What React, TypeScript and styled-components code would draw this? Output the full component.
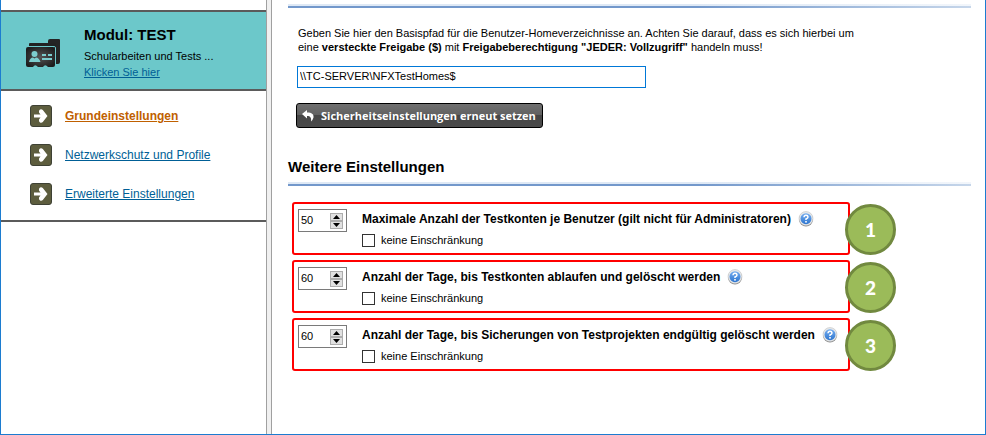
import React, { useState } from "react";
import styled, { createGlobalStyle } from "styled-components";

const GlobalStyle = createGlobalStyle`
  *, *::before, *::after { box-sizing: border-box; }
  body { margin: 0; background: #fff; }
  body, input, button { font-family: "Liberation Sans", Arial, sans-serif; font-size: 11px; color: #000; }
`;

const Window = styled.div`
  display: flex;
  min-height: 100vh;
  border: solid #1c7cd0;
  border-width: 0 1px 1px;
`;

const Sidebar = styled.aside`
  flex: 0 0 265px;
  padding-top: 10px;
`;

const Splitter = styled.div`
  flex: 0 0 6px;
  background: #f0f0f0;
  border: solid #a0a0a0;
  border-width: 0 1px;
`;

const ModuleCard = styled.section`
  display: flex;
  align-items: center;
  gap: 23px;
  height: 81px;
  padding: 4px 0 0 24px;
  background: #6cc8ca;
  border: solid #5b5b5b;
  border-width: 2px 0;
`;

const ModuleText = styled.div`
  display: flex;
  flex-direction: column;
  align-items: flex-start;
  line-height: 16px;
`;

const ModuleTitle = styled.h1`
  margin: 0 0 3px;
  font-size: 15px;
  line-height: 20px;
`;

const TextLink = styled.a`
  color: #005f96;
`;

const Nav = styled.nav`
  border-bottom: 2px solid #5b5b5b;
  padding: 14px 0 15px;
`;

const NavList = styled.ul`
  display: grid;
  gap: 17px;
  margin: 0;
  padding: 0 0 0 29px;
  list-style: none;
`;

const NavLink = styled.a<{ $active?: boolean }>`
  display: flex;
  align-items: center;
  gap: 13px;
  font-size: 12px;
  line-height: 22px;
  text-decoration: none;
  color: ${(p) => (p.$active ? "#c06000" : "#005f96")};
  font-weight: ${(p) => (p.$active ? "bold" : "normal")};
  span { text-decoration: underline; }
`;

const Main = styled.main`
  flex: 1;
  min-width: 0;
  padding: 4px 14px 20px 16px;
`;

const Rule = styled.hr`
  height: 4px;
  margin: 0;
  border: 0;
  background:
    linear-gradient(90deg, #dfe9f5 60%, #f2f6fb) top / 100% 2px no-repeat,
    linear-gradient(90deg, #7398cb 60%, #c6d6ea) bottom / 100% 2px no-repeat;
`;

const PathForm = styled.form`
  padding: 18px 0 0 8px;
`;

const Hint = styled.label`
  display: block;
  max-width: 568px;
  padding-left: 2px;
  line-height: 14px;
`;

const PathInput = styled.input`
  display: block;
  width: 100%;
  max-width: 349px;
  height: 22px;
  margin: 12px 0 15px 1px;
  padding: 0 2px 2px;
  border: 1px solid #0078d7;
  outline: 0;
`;

const ResetButton = styled.button`
  display: flex;
  align-items: center;
  gap: 6px;
  height: 25px;
  padding: 0 6px 0 4px;
  border: 1px solid #000;
  border-radius: 3px;
  background: linear-gradient(#707070, #606060 50%, #464646 50%, #4b4b4b);
  color: #fff;
  font: bold 11px/23px "Open Sans", "Noto Sans", sans-serif;
  white-space: nowrap;
`;

const SectionTitle = styled.h2`
  margin: 29px 0 5px;
  font-size: 15px;
  line-height: 20px;
`;

const Settings = styled.div`
  display: grid;
  grid-template-columns: minmax(0, 1fr);
  gap: 5px;
  max-width: 562px;
  padding: 16px 0 0 4px;
`;

const SettingBox = styled.section`
  position: relative;
  display: flex;
  align-items: flex-start;
  gap: 15px;
  height: 53px;
  padding: 5px 4px;
  border: 2px solid #f00;
  border-radius: 3px;
`;

const Badge = styled.span`
  position: absolute;
  top: 0;
  right: -48px;
  width: 51px;
  height: 51px;
  border: 3px solid #71893f;
  border-radius: 50%;
  background: #9bbb59;
  color: #fff;
  font: 900 19px/45px Lato, sans-serif;
  text-align: center;
`;

const SpinBox = styled.div`
  display: flex;
  align-items: center;
  flex: none;
  width: 49px;
  height: 23px;
  padding-right: 3px;
  border: 1px solid #7a7a7a;
  background: #fff;
`;

const SpinInput = styled.input`
  flex: 1;
  width: 0;
  min-width: 0;
  height: 19px;
  padding: 0 2px 2px;
  border: 0;
  outline: 0;
`;

const SpinButtons = styled.div`
  display: grid;
`;

const SpinButton = styled.button`
  display: grid;
  place-items: center;
  width: 13px;
  height: 8px;
  padding: 0;
  border: 1px solid #adadad;
  background: #e1e1e1;
`;

const SettingBody = styled.div`
  display: grid;
  gap: 5px;
`;

const SettingHead = styled.div`
  display: flex;
  align-items: center;
  gap: 7px;
  height: 20px;
`;

const SettingLabel = styled.label`
  font-size: 12px;
  font-weight: bold;
  white-space: nowrap;
`;

const HelpButton = styled.button`
  display: flex;
  padding: 0;
  border: 0;
  background: none;
`;

const CheckLabel = styled.label`
  display: flex;
  align-items: center;
  gap: 6px;
  line-height: 13px;
`;

const Checkbox = styled.input`
  appearance: none;
  width: 13px;
  height: 13px;
  margin: 0;
  border: 1px solid #333;
  background: #fff;
  &:checked { box-shadow: inset 0 0 0 2px #fff; background: #333; }
`;

const FoldersIcon = () => (
  <svg width="36" height="30" viewBox="0 0 36 30" aria-hidden="true">
    <defs>
      <radialGradient id="folder" cx="50%" cy="50%" r="60%">
        <stop offset="0" stopColor="#555" />
        <stop offset="1" stopColor="#1d1d1d" />
      </radialGradient>
    </defs>
    <path d="M23 3q0-2 2-2h9q1 0 1 1v22q0 2-2 2h-4V7h-6z" fill="#242424" />
    <path d="M4 8V6q0-1 1-1h25q1 0 1 1v20h-2V8z" fill="#222" />
    <path d="M3 8.500h26q1.500 0 1.500 1.500v18" fill="none" stroke="#6cc8ca" />
    <rect x="1" y="9" width="29" height="20" rx="2" fill="url(#folder)" />
    <circle cx="9.500" cy="16" r="3" fill="#7ccdce" />
    <path d="M4 24q1-4.500 4-4.500l1.500 1 1.500-1q3 0 4.500 4.500z" fill="#7ccdce" />
    <path d="M17 17h4m2 0h4m-10 4h10" stroke="#7ccdce" strokeWidth="2" />
    <path d="M8 29q2-3.500 5 0zm10 0q2-3.500 5 0z" fill="#6cc8ca" />
  </svg>
);

const ArrowIcon = () => (
  <svg width="22" height="22" viewBox="0 0 22 22" aria-hidden="true">
    <rect x=".5" y=".5" width="21" height="21" rx="2.500" fill="#5d5d3e" stroke="#3e4134" />
    <path d="M4 9.500h6.500L9 7.500Q8.500 5.500 10 4.500q1.500-.8 2.800.4l4.700 6.100-4.700 6.100q-1.300 1.200-2.800.4-1.500-1-1-3l1.500-2H4z" fill="#fff" />
  </svg>
);

const UndoIcon = () => (
  <svg width="14" height="14" viewBox="0 0 14 14" aria-hidden="true">
    <path d="M1 5l5-4v2.500c5 0 7 2 6.500 5q-.5 2-2.500 4c.6-3.500-.5-5.500-4-5.500v2.500z" fill="#fff" />
  </svg>
);

const HelpIcon = () => (
  <svg width="16" height="16" viewBox="0 0 16 16" aria-hidden="true">
    <defs>
      <linearGradient id="help" x1="0" y1="0" x2="0" y2="1">
        <stop offset="0" stopColor="#76aef0" />
        <stop offset="1" stopColor="#2d75cf" />
      </linearGradient>
    </defs>
    <circle cx="8" cy="8.500" r="7" fill="#8c8c8c" />
    <circle cx="8" cy="7.500" r="7" fill="#e4e7ea" stroke="#bbb" strokeWidth=".5" />
    <circle cx="8" cy="7.700" r="5.500" fill="url(#help)" />
    <path d="M6 6.300q.2-2 2-2t2 1.600Q10 7 8 8v1" fill="none" stroke="#fff" strokeWidth="1.500" />
    <rect x="7.200" y="10" width="1.600" height="1.600" fill="#fff" />
  </svg>
);

const Triangle = ({ down }: { down?: boolean }) => (
  <svg width="7" height="4" viewBox="0 0 7 4" aria-hidden="true">
    <path d={down ? "M0 0h7L3.500 4z" : "M0 4h7L3.500 0z"} />
  </svg>
);

const navItems = ["Grundeinstellungen", "Netzwerkschutz und Profile", "Erweiterte Einstellungen"];

const settings = [
  { label: "Maximale Anzahl der Testkonten je Benutzer (gilt nicht für Administratoren)", initial: 50 },
  { label: "Anzahl der Tage, bis Testkonten ablaufen und gelöscht werden", initial: 60 },
  { label: "Anzahl der Tage, bis Sicherungen von Testprojekten endgültig gelöscht werden", initial: 60 },
];

function Setting({ label, initial, number }: { label: string; initial: number; number: number }) {
  const [value, setValue] = useState(initial);
  const id = `setting-${number}`;
  return (
    <SettingBox>
      <SpinBox>
        <SpinInput id={id} inputMode="numeric" value={value} onChange={(e) => setValue(Number(e.target.value) || 0)} />
        <SpinButtons>
          <SpinButton type="button" aria-label="Erhöhen" onClick={() => setValue(value + 1)}><Triangle /></SpinButton>
          <SpinButton type="button" aria-label="Verringern" onClick={() => setValue(Math.max(0, value - 1))}><Triangle down /></SpinButton>
        </SpinButtons>
      </SpinBox>
      <SettingBody>
        <SettingHead>
          <SettingLabel htmlFor={id}>{label}</SettingLabel>
          <HelpButton type="button" aria-label="Hilfe"><HelpIcon /></HelpButton>
        </SettingHead>
        <CheckLabel><Checkbox type="checkbox" />keine Einschränkung</CheckLabel>
      </SettingBody>
      <Badge>{number}</Badge>
    </SettingBox>
  );
}

export default function App() {
  return (
    <>
      <GlobalStyle />
      <Window>
        <Sidebar>
          <ModuleCard>
            <FoldersIcon />
            <ModuleText>
              <ModuleTitle>Modul: TEST</ModuleTitle>
              <span>Schularbeiten und Tests ...</span>
              <TextLink href="#modul">Klicken Sie hier</TextLink>
            </ModuleText>
          </ModuleCard>
          <Nav>
            <NavList>
              {navItems.map((item, i) => (
                <li key={item}>
                  <NavLink href={`#${i}`} $active={i === 0}><ArrowIcon /><span>{item}</span></NavLink>
                </li>
              ))}
            </NavList>
          </Nav>
        </Sidebar>
        <Splitter />
        <Main>
          <Rule />
          <PathForm onSubmit={(e) => e.preventDefault()}>
            <Hint htmlFor="path">
              Geben Sie hier den Basispfad für die Benutzer-Homeverzeichnisse an. Achten Sie darauf, dass es sich hierbei um
              eine <b>versteckte Freigabe ($)</b> mit <b>Freigabeberechtigung "JEDER: Vollzugriff"</b> handeln muss!
            </Hint>
            <PathInput id="path" defaultValue={"\\\\TC-SERVER\\NFXTestHomes$"} />
            <ResetButton type="submit"><UndoIcon />Sicherheitseinstellungen erneut setzen</ResetButton>
          </PathForm>
          <SectionTitle>Weitere Einstellungen</SectionTitle>
          <Rule />
          <Settings>
            {settings.map((s, i) => <Setting key={s.label} {...s} number={i + 1} />)}
          </Settings>
        </Main>
      </Window>
    </>
  );
}
